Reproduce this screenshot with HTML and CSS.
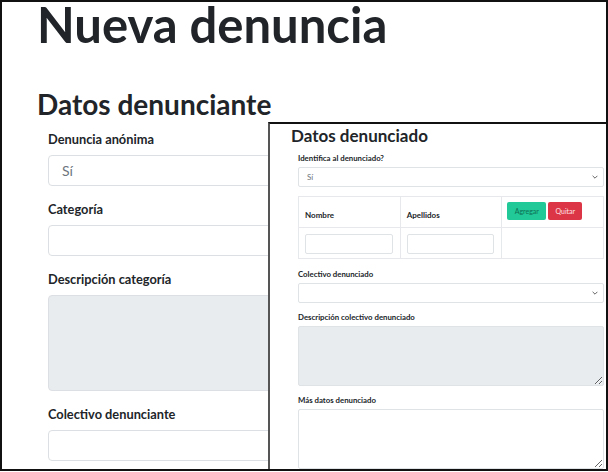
FILE: index.html
```html
<!DOCTYPE html>
<html lang="es">
<head>
    <meta charset="UTF-8">
    <meta name="viewport" content="width=device-width, initial-scale=1.0">
    <title>Nueva denuncia</title>
    <link rel="stylesheet" href="styles.css">
</head>
<body>
    <div class="frame">
        <!-- Main page -->
        <main class="page">
            <h1 class="title">Nueva denuncia</h1>
            <h2 class="section-title">Datos denunciante</h2>

            <div class="form">
                <div class="group">
                    <label class="label">Denuncia anónima</label>
                    <div class="field select">Sí</div>
                </div>
                <div class="group">
                    <label class="label">Categoría</label>
                    <div class="field"></div>
                </div>
                <div class="group">
                    <label class="label">Descripción categoría</label>
                    <div class="field area disabled"></div>
                </div>
                <div class="group">
                    <label class="label">Colectivo denunciante</label>
                    <div class="field"></div>
                </div>
            </div>
        </main>

        <!-- Second window on top -->
        <section class="popup">
            <h2 class="popup-title">Datos denunciado</h2>

            <div class="mini-group">
                <label class="mini-label">Identifica al denunciado?</label>
                <div class="mini-field mini-select">
                    <span>Sí</span>
                    <svg class="chevron" viewBox="0 0 6 4"><polyline points="0.6,0.8 3,3.2 5.4,0.8" fill="none" stroke="#555" stroke-width="0.9"/></svg>
                </div>
            </div>

            <table class="people">
                <thead>
                    <tr>
                        <th>Nombre</th>
                        <th>Apellidos</th>
                        <th class="actions">
                            <button class="btn btn-add">Agregar</button>
                            <button class="btn btn-remove">Quitar</button>
                        </th>
                    </tr>
                </thead>
                <tbody>
                    <tr>
                        <td><div class="mini-input"></div></td>
                        <td><div class="mini-input"></div></td>
                        <td></td>
                    </tr>
                </tbody>
            </table>

            <div class="mini-group">
                <label class="mini-label">Colectivo denunciado</label>
                <div class="mini-field mini-select">
                    <span></span>
                    <svg class="chevron" viewBox="0 0 6 4"><polyline points="0.6,0.8 3,3.2 5.4,0.8" fill="none" stroke="#555" stroke-width="0.9"/></svg>
                </div>
            </div>

            <div class="mini-group">
                <label class="mini-label">Descripción colectivo denunciado</label>
                <textarea class="mini-area disabled" disabled></textarea>
            </div>

            <div class="mini-group">
                <label class="mini-label">Más datos denunciado</label>
                <textarea class="mini-area"></textarea>
            </div>
        </section>
    </div>
</body>
</html>
```

FILE: styles.css
```css
* {
    margin: 0;
    padding: 0;
    box-sizing: border-box;
}

body {
    background: #fff;
    font-family: 'Lato', 'Liberation Sans', sans-serif;
    color: #212529;
}

/* Outer frame */
.frame {
    position: relative;
    width: 608px;
    height: 471px;
    border: 2px solid #111;
    overflow: hidden;
}

/* Main page */
.page {
    padding-left: 35px;
}

.title {
    margin-top: -1.5px;
    font-size: 49px;
    line-height: 47px;
    font-weight: 700;
}

.section-title {
    margin-top: 40.7px;
    font-size: 28px;
    line-height: 32px;
    font-weight: 700;
}

.form {
    margin-top: 8.6px;
    padding-left: 11px;
    width: 520px;
}

.group {
    margin-bottom: 13px;
}

.label {
    display: block;
    font-size: 12.8px;
    line-height: 20px;
    font-weight: 700;
    margin-bottom: 6px;
}

.field {
    height: 31px;
    border: 1px solid #dcdfe3;
    border-radius: 4px;
    background: #fff;
}

.select {
    padding-left: 13px;
    font-size: 14px;
    line-height: 29px;
    color: #6c757d;
}

.area {
    height: 96px;
}

.disabled {
    background: #e9ecef;
}

/* Popup window */
.popup {
    position: absolute;
    left: 266px;
    top: 120px;
    right: 0;
    bottom: 0;
    background: #fff;
    border-top: 2px solid #111;
    border-left: 2px solid #555;
    padding: 2.4px 2px 0 21px;
}

.popup-title {
    font-size: 17px;
    line-height: 20px;
    font-weight: 700;
    margin-bottom: 7px;
}

.mini-group,
.people {
    margin-left: 7px;
}

.mini-group {
    margin-bottom: 9px;
}

.mini-label {
    display: block;
    font-size: 7.8px;
    line-height: 11px;
    font-weight: 700;
    margin-bottom: 3px;
}

.mini-field {
    height: 20px;
    border: 1px solid #e0e3e6;
    border-radius: 2px;
    background: #fff;
}

.mini-select {
    display: flex;
    justify-content: space-between;
    align-items: center;
    padding: 0 5px 0 8px;
    font-size: 8px;
    color: #6c757d;
}

.chevron {
    width: 6px;
    height: 4px;
}

.mini-area {
    display: block;
    width: 100%;
    height: 60px;
    border: 1px solid #e0e3e6;
    border-radius: 2px;
    background: #fff;
    font-family: inherit;
}

.mini-area.disabled {
    background: #e9ecef;
}

/* People table */
.people {
    width: calc(100% - 7px);
    border-collapse: collapse;
    margin-bottom: 9.4px;
    font-size: 8px;
}

.people th,
.people td {
    border: 1px solid #e6e8eb;
    width: 33.3%;
}

.people th {
    height: 31px;
    text-align: left;
    vertical-align: bottom;
    padding: 0 6px 7px;
    font-weight: 700;
}

.people th.actions {
    vertical-align: top;
    padding: 5px 5px 0;
}

.people td {
    height: 31px;
    padding: 5px 7px 4px 6px;
}

.mini-input {
    height: 20px;
    border: 1px solid #e0e3e6;
    border-radius: 2px;
}

.btn {
    height: 18px;
    border: none;
    border-radius: 2px;
    font-family: inherit;
    font-size: 7px;
    color: #fff;
    padding: 0 6px;
}

.btn-add {
    width: 39px;
    background: #20c997;
    color: #0e6e55;
}

.btn-remove {
    width: 34px;
    background: #dc3545;
    color: #ffe3e6;
}
```
